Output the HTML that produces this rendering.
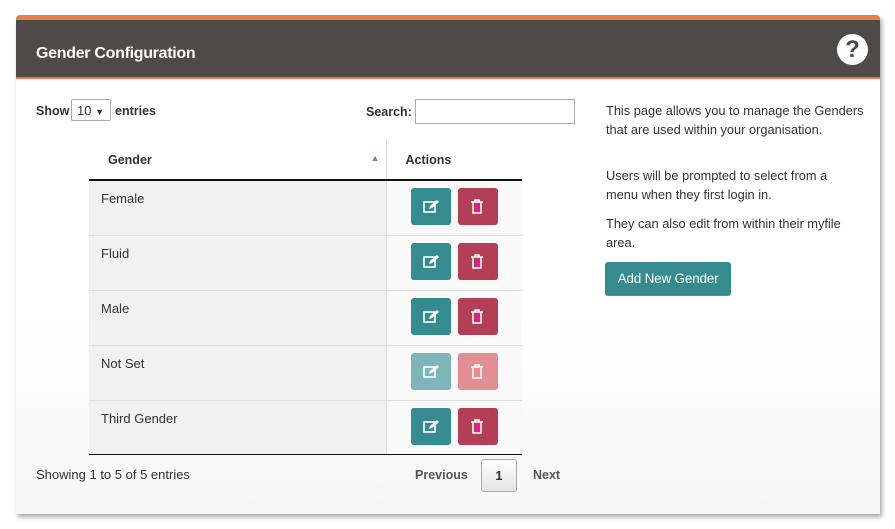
<!DOCTYPE html>
<html><head><meta charset="utf-8"><style>
*{box-sizing:border-box;margin:0;padding:0}
body{width:895px;height:529px;background:#fff;font-family:"Liberation Sans",sans-serif;color:#333;font-size:13px;position:relative;overflow:hidden}
.panel{position:absolute;left:16px;top:15px;width:864px;height:499px;background:linear-gradient(#fff 60%,#f6f6f6);box-shadow:2px 3px 5px rgba(0,0,0,.35);border-radius:4px 4px 0 0}
.hdr{position:absolute;left:0;top:0;width:864px;height:64px;background:#4f4a4a;border-top:5px solid #e8804a;border-bottom:2px solid #e8804a;border-radius:4px 4px 0 0}
.hdr h1{position:absolute;left:20px;top:25px;color:#fff;font-size:16px;font-weight:bold;letter-spacing:-0.3px}
.q{position:absolute;left:821px;top:14px;width:31px;height:31px;border-radius:50%;background:#fff;color:#4f4a4a;font-weight:bold;font-size:24px;text-align:center;line-height:31px}
.a{position:absolute;white-space:nowrap}
.b{font-weight:bold;font-size:12.5px}
.sel{position:absolute;left:71px;top:99px;width:40px;height:22px;border:1px solid #aaa;border-radius:2px;background:#fff;font-size:13px;padding:3px 0 0 5px}
.inp{position:absolute;left:415px;top:99px;width:160px;height:25px;border:1px solid #aaa}
table{position:absolute;left:89px;top:140px;width:433px;border-collapse:collapse}
th{height:40px;text-align:left;font-weight:bold;font-size:12.5px;border-bottom:2px solid #111;background:#fff;padding-left:19px}
th.ac{border-left:1px solid #ddd;padding-left:19px}
td{height:55px;border-top:1px solid #ddd;vertical-align:top}
td.g{background:#f1f1f1;padding:10px 0 0 12px;width:297px}
td.x{background:#f9f9f9;border-left:1px solid #ddd;padding:7px 0 0 24px;font-size:0}
tr:first-child td{border-top:none}
.btn{display:inline-block;width:40px;height:37px;border-radius:3px;margin-right:7px;vertical-align:top;position:relative}
.e{background:#358b8f}.d{background:#b33f56}
.e.l{background:#7db5b8}.d.l{background:#e28e95}
.btn svg{position:absolute;left:12px;top:11px}
.bot{position:absolute;left:89px;top:454px;width:433px;border-top:1px solid #111}
.pg{position:absolute;left:481px;top:459px;width:36px;height:33px;border:1px solid #aaa;border-radius:3px;background:linear-gradient(#fff,#e4e4e4);text-align:center;line-height:31px;font-weight:bold}
.add{position:absolute;left:605px;top:262px;width:126px;height:34px;background:#358b8f;color:#fff;border-radius:3px;text-align:center;line-height:34px;font-size:13.5px;border-bottom:1px solid #1fa8b8;letter-spacing:-0.2px}
.r{font-size:12.8px}
</style></head><body>
<div class="panel">
<div class="hdr"><h1>Gender Configuration</h1><div class="q">?</div></div>
</div>
<div class="a b" style="left:36px;top:104px">Show</div>
<div class="sel">10 <span style="font-size:9px">▼</span></div>
<div class="a b" style="left:115px;top:104px">entries</div>
<div class="a b" style="left:366px;top:105px">Search:</div>
<div class="inp"></div>
<table>
<tr><th>Gender <span style="float:right;margin-right:6px;color:#7a7ad0;font-size:9px">▲</span></th><th class="ac">Actions</th></tr>
<tr><td class="g">Female</td><td class="x"><span class="btn e"><svg width="17" height="15" viewBox="0 0 17 15"><rect x="1" y="3" width="11" height="10" fill="none" stroke="#fff" stroke-width="1.6"/><path d="M6 10l1-3 7-6 2 2-7 6z" fill="#fff"/></svg></span><span class="btn d"><svg width="14" height="15" viewBox="0 0 14 15"><path d="M1 3h12M5 3V1h4v2M3 3v11h8V3" fill="none" stroke="#fff" stroke-width="1.5"/><path d="M5.5 5v7M8.5 5v7" stroke="#f0c" stroke-width="1"/></svg></span></td></tr>
<tr><td class="g">Fluid</td><td class="x"><span class="btn e"><svg width="17" height="15" viewBox="0 0 17 15"><rect x="1" y="3" width="11" height="10" fill="none" stroke="#fff" stroke-width="1.6"/><path d="M6 10l1-3 7-6 2 2-7 6z" fill="#fff"/></svg></span><span class="btn d"><svg width="14" height="15" viewBox="0 0 14 15"><path d="M1 3h12M5 3V1h4v2M3 3v11h8V3" fill="none" stroke="#fff" stroke-width="1.5"/><path d="M5.5 5v7M8.5 5v7" stroke="#f0c" stroke-width="1"/></svg></span></td></tr>
<tr><td class="g">Male</td><td class="x"><span class="btn e"><svg width="17" height="15" viewBox="0 0 17 15"><rect x="1" y="3" width="11" height="10" fill="none" stroke="#fff" stroke-width="1.6"/><path d="M6 10l1-3 7-6 2 2-7 6z" fill="#fff"/></svg></span><span class="btn d"><svg width="14" height="15" viewBox="0 0 14 15"><path d="M1 3h12M5 3V1h4v2M3 3v11h8V3" fill="none" stroke="#fff" stroke-width="1.5"/><path d="M5.5 5v7M8.5 5v7" stroke="#f0c" stroke-width="1"/></svg></span></td></tr>
<tr><td class="g">Not Set</td><td class="x"><span class="btn e l"><svg width="17" height="15" viewBox="0 0 17 15"><rect x="1" y="3" width="11" height="10" fill="none" stroke="#fff" stroke-width="1.6"/><path d="M6 10l1-3 7-6 2 2-7 6z" fill="#fff"/></svg></span><span class="btn d l"><svg width="14" height="15" viewBox="0 0 14 15"><path d="M1 3h12M5 3V1h4v2M3 3v11h8V3" fill="none" stroke="#fff" stroke-width="1.5"/></svg></span></td></tr>
<tr><td class="g">Third Gender</td><td class="x"><span class="btn e"><svg width="17" height="15" viewBox="0 0 17 15"><rect x="1" y="3" width="11" height="10" fill="none" stroke="#fff" stroke-width="1.6"/><path d="M6 10l1-3 7-6 2 2-7 6z" fill="#fff"/></svg></span><span class="btn d"><svg width="14" height="15" viewBox="0 0 14 15"><path d="M1 3h12M5 3V1h4v2M3 3v11h8V3" fill="none" stroke="#fff" stroke-width="1.5"/><path d="M5.5 5v7M8.5 5v7" stroke="#f0c" stroke-width="1"/></svg></span></td></tr>
</table>
<div class="bot"></div>
<div class="a" style="left:36px;top:467px">Showing 1 to 5 of 5 entries</div>
<div class="a b" style="left:415px;top:468px;color:#555">Previous</div>
<div class="pg">1</div>
<div class="a b" style="left:533px;top:468px;color:#555">Next</div>
<div class="a r" style="left:606px;top:101px;line-height:19px">This page allows you to manage the Genders<br>that are used within your organisation.</div>
<div class="a r" style="left:606px;top:166px;line-height:19px">Users will be prompted to select from a<br>menu when they first login in.</div>
<div class="a r" style="left:606px;top:214px;line-height:19px">They can also edit from within their myfile<br>area.</div>
<div class="add">Add New Gender</div>
</body></html>
